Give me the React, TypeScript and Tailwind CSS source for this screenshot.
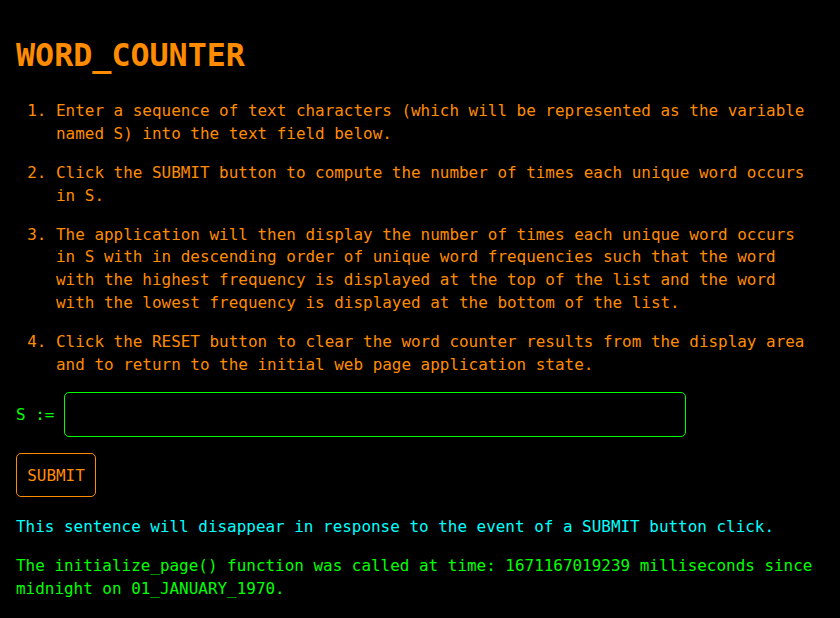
import React from "react";

export default function App() {
  const mono = { fontFamily: '"DejaVu Sans Mono", monospace' };
  return (
    <div className="min-h-[618px] w-full bg-black pl-4 pr-6 pt-[37px]" style={mono}>
      <h1 className="text-[31.7px] leading-[37px] font-bold text-[#ff8c00]">WORD_COUNTER</h1>
      <ol className="mt-[26px] list-decimal pl-10 text-[15.94px] leading-[22.88px] text-[#ff8c00] flex flex-col gap-4">
        <li>
          Enter a sequence of text characters (which will be represented as the variable named S) into the text field below.
        </li>
        <li>
          Click the SUBMIT button to compute the number of times each unique word occurs in S.
        </li>
        <li>
          The application will then display the number of times each unique word occurs in S with in descending order of unique word frequencies such that the word with the highest frequency is displayed at the top of the list and the word with the lowest frequency is displayed at the bottom of the list.
        </li>
        <li>
          Click the RESET button to clear the word counter results from the display area and to return to the initial web page application state.
        </li>
      </ol>
      <div className="mt-[15.5px] flex items-center gap-[9.5px] text-[15.94px] leading-[23px] text-[#00ff00]">
        <span>S :=</span>
        <input
          type="text"
          className="h-[45px] w-[622px] rounded-[5px] border border-[#00ff00] bg-black px-2 text-[#00ff00] outline-none"
          style={mono}
        />
      </div>
      <button
        className="mt-4 flex h-[44px] w-[80px] items-center justify-center rounded-[5px] border border-[#ff8c00] bg-black text-[15.94px] leading-[23px] text-[#ff8c00]"
        style={mono}
      >
        SUBMIT
      </button>
      <p className="mt-[18.7px] text-[15.94px] leading-[22.88px] text-[#00ffff]">
        This sentence will disappear in response to the event of a SUBMIT button click.
      </p>
      <p className="mt-4 text-[15.94px] leading-[22.88px] text-[#00ff00]">
        The initialize_page() function was called at time: 1671167019239 milliseconds since midnight on 01_JANUARY_1970.
      </p>
    </div>
  );
}
